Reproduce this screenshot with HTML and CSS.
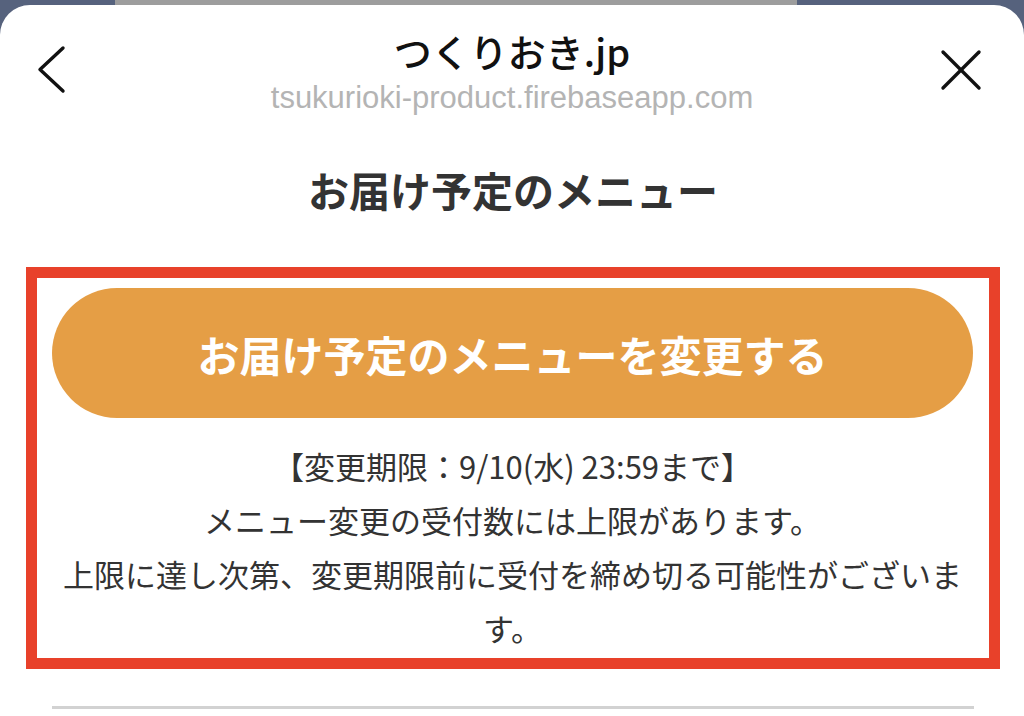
FILE: index.html
```html
<!DOCTYPE html>
<html lang="ja">
<head>
<meta charset="utf-8">
<title>お届け予定のメニュー</title>
<link rel="stylesheet" href="styles.css">
</head>
<body>
<div class="peek"></div>
<div class="sheet">
  <header class="header">
    <div class="hd-left">
      <svg class="ic-back" width="30" height="50" viewBox="0 0 30 50" aria-hidden="true">
        <polyline points="27,3 4,24.5 27,46" fill="none" stroke="#111" stroke-width="3.4" stroke-linecap="round" stroke-linejoin="round"/>
      </svg>
    </div>
    <div class="hd-center">
      <div class="site-title">つくりおき.jp</div>
      <div class="site-url">tsukurioki-product.firebaseapp.com</div>
    </div>
    <div class="hd-right">
      <svg class="ic-close" width="44" height="44" viewBox="0 0 44 44" aria-hidden="true">
        <line x1="4" y1="4" x2="40" y2="40" stroke="#111" stroke-width="3.4" stroke-linecap="round"/>
        <line x1="40" y1="4" x2="4" y2="40" stroke="#111" stroke-width="3.4" stroke-linecap="round"/>
      </svg>
    </div>
  </header>
  <main class="content">
    <h1 class="page-title">お届け予定のメニュー</h1>
    <section class="notice">
      <div class="btn-change">お届け予定のメニューを変更する</div>
      <p class="notice-text">【変更期限：9/10(水) 23:59まで】<br>メニュー変更の受付数には上限があります。<br>上限に達し次第、変更期限前に受付を締め切る可能性がございます。</p>
    </section>
    <hr class="divider">
  </main>
</div>
</body>
</html>
```
FILE: styles.css
```css
html, body {
  margin: 0;
  padding: 0;
}
body {
  width: 1024px;
  height: 716px;
  overflow: hidden;
  background: #56627d;
  font-family: "Noto Sans CJK JP", sans-serif;
}
.peek {
  width: 682px;
  height: 5px;
  margin-left: 115px;
  background: #9d9d9d;
}
.sheet {
  height: 711px;
  background: #ffffff;
  border-radius: 30px 30px 0 0;
  overflow: hidden;
}
.header {
  display: grid;
  grid-template-columns: 1fr auto 1fr;
  padding-top: 24px;
}
.hd-left {
  justify-self: start;
}
.hd-right {
  justify-self: end;
}
.ic-back {
  display: block;
  margin-left: 36px;
  margin-top: 16px;
}
.ic-close {
  display: block;
  margin-right: 41px;
  margin-top: 19px;
}
.hd-center {
  text-align: center;
}
.site-title {
  font-size: 38px;
  line-height: 44px;
  font-weight: 500;
  color: #111111;
}
.site-url {
  margin-top: 7px;
  font-family: "Liberation Sans", "Noto Sans CJK JP", sans-serif;
  font-size: 31px;
  line-height: 36px;
  color: #b4b4b4;
}
.content {
  padding: 0 24px 0 26px;
}
.page-title {
  margin: 48px 0 0;
  text-align: center;
  font-size: 41px;
  line-height: 50px;
  font-weight: 700;
  color: #333333;
}
.notice {
  margin-top: 53px;
  border: 11px solid #e8412a;
  padding: 10px 16px 3px 15px;
}
.btn-change {
  height: 130px;
  border-radius: 65px;
  background: #e59e45;
  color: #ffffff;
  font-size: 42px;
  font-weight: 700;
  display: flex;
  align-items: center;
  justify-content: center;
}
.notice-text {
  margin: 21px 0 0;
  text-align: center;
  font-size: 31px;
  line-height: 54px;
  color: #333333;
}
.divider {
  margin: 37px 26px 0 26px;
  border: 0;
  height: 3px;
  background: #d2d2d2;
}
```
